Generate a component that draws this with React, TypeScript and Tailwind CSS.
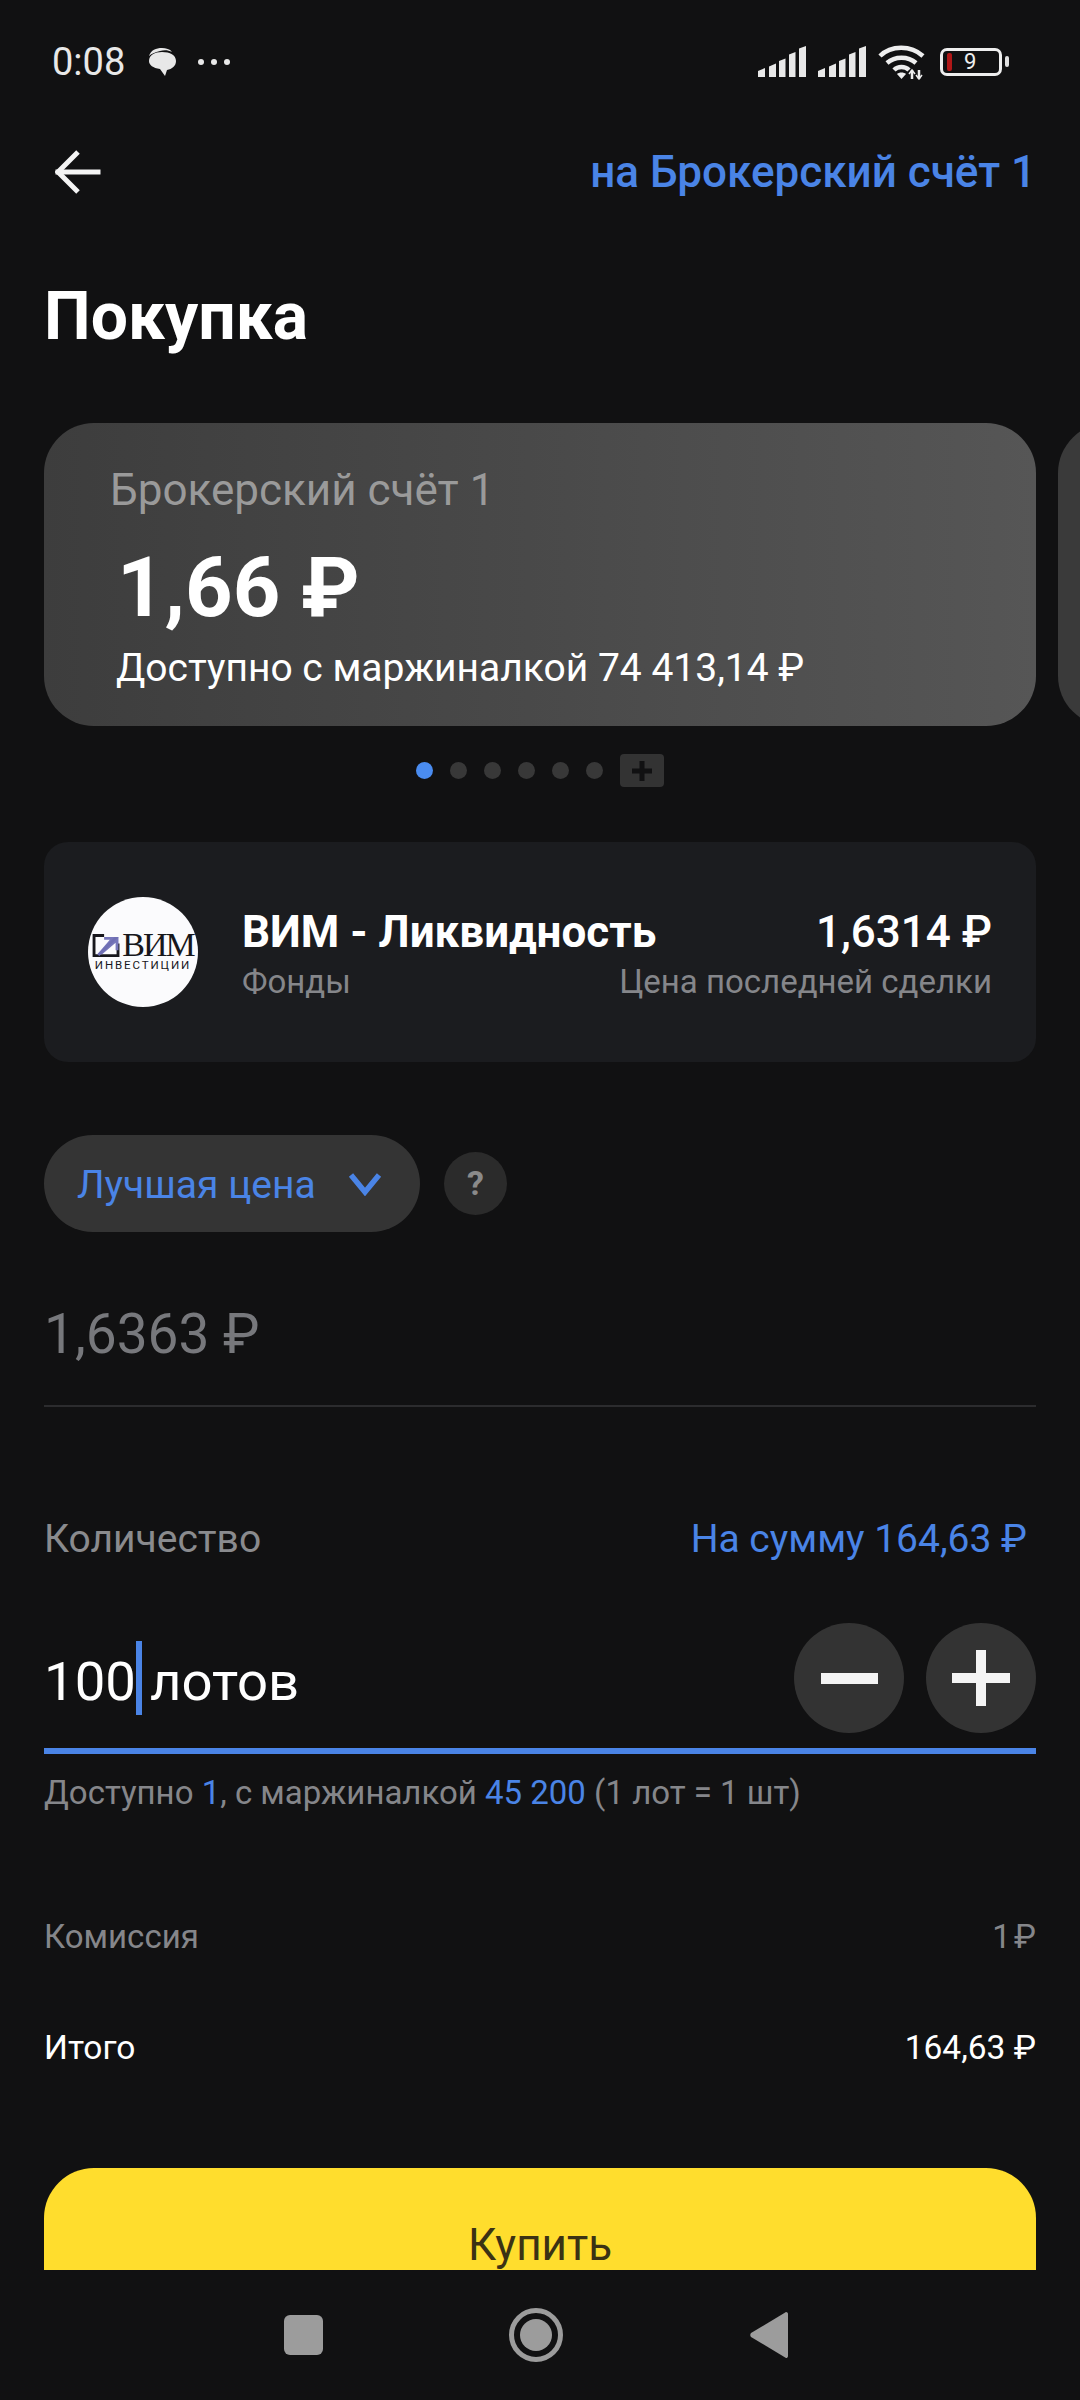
function Signal() {
  return (
    <svg width="48" height="31" viewBox="0 0 48 31" fill="#e8e8e8">
      <path d="M0 25l7-3v9H0z" />
      <path d="M11 20.500l7-3V31h-7z" />
      <path d="M21 15l6.500-2.500V31H21z" />
      <path d="M31 8.500l6.500-2.500V31H31z" />
      <path d="M41 2.500L48 0v31h-7z" />
    </svg>
  );
}

function StatusBar() {
  return (
    <div className="h-[120px] flex items-center justify-between pl-[52px] pr-[78px] pt-[3px] shrink-0">
      <div className="flex items-center">
        <span className="text-[38px] leading-[40px] text-[#e8e8e8] w-[95px]">0:08</span>
        <svg width="30" height="29" viewBox="0 0 30 29">
          <path d="M2 9C4 3 9 1 15 1c4 0 8 1 10 4-4-2-8-2-12-1C8 5 4 7 2 9z" fill="#e8e8e8" />
          <path d="M15 5c8 0 14 3 14 9 0 5-4 8-9 9l-2 6-5-7C6 21 2 18 2 14c0-6 6-9 13-9z" fill="#e8e8e8" />
        </svg>
        <div className="flex gap-[7px] ml-[21px]">
          <div className="w-[6px] h-[6px] rounded-full bg-[#e8e8e8]" />
          <div className="w-[6px] h-[6px] rounded-full bg-[#e8e8e8]" />
          <div className="w-[6px] h-[6px] rounded-full bg-[#e8e8e8]" />
        </div>
      </div>
      <div className="flex items-center">
        <Signal />
        <div className="w-[12px]" />
        <Signal />
        <svg className="ml-[12px]" width="48" height="36" viewBox="0 0 48 36" fill="none" stroke="#eeeeee" strokeWidth="4.500">
          <path d="M2 12C13 1 33 1 45 12" />
          <path d="M9 19c8-7 21-7 29 0" />
          <path d="M16 26c4-4 11-4 15 0" />
          <path d="M19 30l4.500 5 4.500-5c-2-2-7-2-9 0z" fill="#eeeeee" stroke="none" />
          <path d="M34 26v9M41 26v9" strokeWidth="2.500" />
          <path d="M31 30l3-4 3 4M38 31l3 4 3-4" strokeWidth="1.500" />
        </svg>
        <div className="ml-[14px] w-[62px] h-[28px] rounded-[7px] border-[3px] border-[#eeeeee] flex items-center relative">
          <div className="w-[5px] h-[18px] ml-[4px] rounded-[2px] bg-[#b01717]" />
          <span className="ml-[12px] text-[22px] leading-[22px] text-[#eeeeee]">9</span>
          <div className="absolute -right-[10px] w-[4px] h-[11px] rounded-[2px] bg-[#e0e0e0]" />
        </div>
      </div>
    </div>
  );
}

function Logo() {
  return (
    <div className="w-[110px] h-[110px] rounded-full bg-[#fbfbfd] shrink-0 flex flex-col items-center pt-[36px]">
      <div className="flex items-center h-[24px]">
        <svg width="29" height="23" viewBox="0 0 29 24">
          <path d="M0 0h12v3H3v18h22V10h3v14H0z" fill="#17171c" />
          <path d="M5 21L18 6h-6V3h15v14h-3v-8L10 21z" fill="#7777bb" />
          <path d="M5 21L23 3h4L7 23z" fill="#6f6fb3" />
        </svg>
        <span className="font-['Liberation_Serif',serif] text-[34px] leading-[24px] text-[#17171c] ml-[1px] tracking-[-2px]">ВИМ</span>
      </div>
      <span className="text-[11.500px] leading-[14px] mt-[1px] text-[#17171c] tracking-[1.900px] whitespace-nowrap">ИНВЕСТИЦИИ</span>
    </div>
  );
}

function NavBar() {
  return (
    <div className="h-[130px] shrink-0 flex items-center justify-center pr-[8px]">
      <div className="w-[39px] h-[40px] rounded-[6px] bg-[#9c9c9c]" />
      <div className="ml-[186px] w-[54px] h-[54px] rounded-full border-[5px] border-[#9c9c9c] flex items-center justify-center">
        <div className="w-[32px] h-[32px] rounded-full bg-[#9c9c9c]" />
      </div>
      <svg className="ml-[187px]" width="38" height="46" viewBox="0 0 38 46">
        <path d="M36 0c1.500 0 2 1 2 2v42c0 1.500-1 2-2 2L1 25c-1-1-1-3 0-4z" fill="#9c9c9c" />
      </svg>
    </div>
  );
}

export default function App() {
  return (
    <div className="w-[1080px] h-[2400px] bg-[#111112] overflow-hidden flex flex-col font-[Roboto,sans-serif] text-white">
      <StatusBar />

      <div className="h-[104px] shrink-0 flex items-center justify-between pl-[55px] pr-[44px]">
        <svg width="46" height="46" viewBox="0 0 46 46" fill="none" stroke="#f4f4f4" strokeWidth="5" strokeLinecap="square">
          <path d="M3 23h40" />
          <path d="M23 3L3 23l20 20" strokeLinecap="butt" />
        </svg>
        <span className="text-[44px] leading-[50px] font-medium text-[#4a84e6]">на Брокерский счёт 1</span>
      </div>

      <h1 className="h-[184px] mb-[2px] shrink-0 flex items-center pl-[44px] text-[66px] font-bold">Покупка</h1>

      <div className="mt-[13px] flex gap-[22px] pl-[44px] shrink-0">
        <div className="w-[992px] h-[303px] shrink-0 rounded-[50px] bg-gradient-to-r from-[#3d3d3d] to-[#565656] flex flex-col">
          <span className="mt-[42px] ml-[66px] text-[44px] leading-[50px] text-[#9a9a9a]">Брокерский счёт 1</span>
          <span className="mt-[28px] ml-[73px] text-[83px] leading-[90px] font-bold">1,66 ₽</span>
          <span className="mt-[12px] ml-[72px] text-[39px] leading-[46px]">Доступно с маржиналкой 74 413,14 ₽</span>
        </div>
        <div className="w-[992px] h-[303px] shrink-0 rounded-[50px] bg-[#3a3a3a]" />
      </div>

      <div className="mt-[28px] h-[33px] shrink-0 flex items-center justify-center">
        <div className="flex gap-[17px]">
          <div className="w-[17px] h-[17px] rounded-full bg-[#4a8cf0]" />
          <div className="w-[17px] h-[17px] rounded-full bg-[#383838]" />
          <div className="w-[17px] h-[17px] rounded-full bg-[#383838]" />
          <div className="w-[17px] h-[17px] rounded-full bg-[#383838]" />
          <div className="w-[17px] h-[17px] rounded-full bg-[#383838]" />
          <div className="w-[17px] h-[17px] rounded-full bg-[#383838]" />
        </div>
        <div className="ml-[17px] w-[44px] h-[33px] rounded-[4px] bg-[#333333] flex items-center justify-center">
          <svg width="22" height="22" viewBox="0 0 22 22" fill="#111112">
            <path d="M8.500 1h5v7.500H21v5h-7.500V21h-5v-7.500H1v-5h7.500z" />
          </svg>
        </div>
      </div>

      <div className="mt-[55px] mx-[44px] h-[220px] shrink-0 rounded-[24px] bg-[#1b1c1f] flex pl-[44px] pr-[44px] pt-[55px]">
        <Logo />
        <div className="ml-[44px] flex-1 flex flex-col pt-[10px]">
          <div className="flex justify-between items-center h-[50px] text-[44px] leading-[50px]">
            <span className="font-bold">ВИМ - Ликвидность</span>
            <span className="font-medium">1,6314 ₽</span>
          </div>
          <div className="flex justify-between items-center h-[44px] mt-[3px] text-[33px] leading-[44px] text-[#85868a]">
            <span>Фонды</span>
            <span>Цена последней сделки</span>
          </div>
        </div>
      </div>

      <div className="mt-[73px] ml-[44px] flex items-center shrink-0">
        <div className="w-[376px] h-[97px] rounded-full bg-[#343434] flex items-center pl-[33px]">
          <span className="text-[39px] leading-[46px] pt-[3px] text-[#4a84e6] w-[271px]">Лучшая цена</span>
          <svg width="34" height="24" viewBox="0 0 34 24" fill="none" stroke="#4a84e6" strokeWidth="5.500">
            <path d="M3 3l14 17L31 3" />
          </svg>
        </div>
        <div className="ml-[24px] w-[63px] h-[63px] rounded-full bg-[#2b2b2b] flex items-center justify-center text-[34px] font-bold text-[#8a8a8a]">?</div>
      </div>

      <div className="mx-[44px] h-[175px] shrink-0 pt-[31px] border-b-2 border-[#2c2c2e] flex items-center text-[55px] text-[#77787c]">1,6363 ₽</div>

      <div className="mt-[107px] mx-[44px] h-[50px] shrink-0 flex items-center justify-between text-[39px] leading-[50px]">
        <span className="text-[#8a8b8e]">Количество</span>
        <span className="text-[#4a84e6] mr-[9px]">На сумму 164,63 ₽</span>
      </div>

      <div className="mt-[59px] mx-[44px] h-[110px] shrink-0 flex items-center justify-between">
        <div className="flex items-center text-[54.500px] leading-[66px] pt-[6px]">
          <span>100</span>
          <div className="w-[6px] h-[74px] bg-[#4a84e6] -mt-[6px]" />
          <span className="ml-[8px]">лотов</span>
        </div>
        <div className="flex gap-[22px]">
          <div className="w-[110px] h-[110px] rounded-full bg-[#333333] flex items-center justify-center">
            <div className="w-[57px] h-[11px] bg-[#f4f4f4]" />
          </div>
          <div className="w-[110px] h-[110px] rounded-full bg-[#333333] flex items-center justify-center">
            <svg width="58" height="58" viewBox="0 0 58 58" fill="#f4f4f4">
              <path d="M24 1h10v23h24v10H34v23H24V34H0V24h24z" />
            </svg>
          </div>
        </div>
      </div>

      <div className="mt-[15px] mx-[44px] h-[6px] shrink-0 bg-[#4a84e6]" />

      <div className="mx-[44px] h-[78px] shrink-0 flex items-center text-[33px] leading-[44px] text-[#85868a] whitespace-pre">
        <span>Доступно </span>
        <span className="text-[#4a84e6]">1</span>
        <span>, с маржиналкой </span>
        <span className="text-[#4a84e6]">45 200</span>
        <span> (1 лот = 1 шт)</span>
      </div>

      <div className="mt-[80px] mx-[44px] h-[50px] shrink-0 flex items-center justify-between text-[33px] leading-[50px] text-[#85868a]">
        <span>Комиссия</span>
        <span>1{'\u200a'}₽</span>
      </div>

      <div className="mt-[61px] mx-[44px] h-[50px] shrink-0 flex items-center justify-between text-[33.500px] leading-[50px]">
        <span>Итого</span>
        <span>164,63 ₽</span>
      </div>

      <div className="mt-[95px] mx-[44px] h-[102px] shrink-0 overflow-hidden">
        <div className="h-[154px] rounded-t-[50px] bg-[#ffdd2d] flex items-center justify-center text-[44px] text-[#3b3214]">Купить</div>
      </div>

      <NavBar />
    </div>
  );
}
